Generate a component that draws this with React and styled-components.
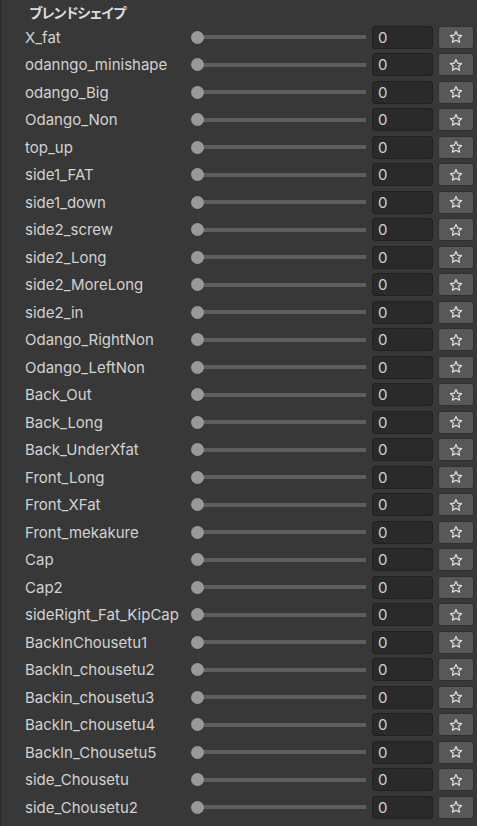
import React from 'react';
import styled, { createGlobalStyle } from 'styled-components';

const GlobalStyle = createGlobalStyle`
  html, body {
    margin: 0;
    padding: 0;
    background: #383838;
  }
  body {
    font-family: Inter, "Noto Sans", "Noto Sans CJK JP", sans-serif;
  }
`;

const Panel = styled.div`
  width: 477px;
  height: 826px;
  box-sizing: border-box;
  background: #383838;
  border-left: 2px solid #2e2e2e;
  overflow: hidden;
  display: flex;
  flex-direction: column;
`;

const Header = styled.div`
  height: 23.5px;
  display: flex;
  align-items: center;
  padding-left: 27px;
  font-family: "Noto Sans CJK JP", sans-serif;
  font-weight: 700;
  font-size: 14px;
  letter-spacing: -2px;
  color: #dcdcdc;
`;

const Row = styled.div`
  height: 27.5px;
  flex-shrink: 0;
  display: flex;
  align-items: center;
  padding-left: 23px;
  padding-right: 3px;
`;

const Label = styled.div`
  width: 166px;
  flex-shrink: 0;
  font-size: 15px;
  color: #d2d2d2;
  white-space: nowrap;
  overflow: hidden;
`;

const Slider = styled.div`
  position: relative;
  width: 175px;
  height: 14px;
  flex-shrink: 0;
  display: flex;
  align-items: center;
`;

const Track = styled.div`
  margin-left: 6px;
  flex: 1;
  height: 4px;
  background: #5e5e5e;
`;

const Knob = styled.div`
  position: absolute;
  left: 0;
  top: 0.5px;
  width: 13px;
  height: 13px;
  border-radius: 50%;
  background: #999999;
`;

const NumberField = styled.div`
  margin-left: 6px;
  width: 61px;
  height: 23px;
  box-sizing: border-box;
  border: 1px solid #212121;
  border-radius: 3px;
  background: #2a2a2a;
  color: #d2d2d2;
  font-size: 15px;
  display: flex;
  align-items: center;
  padding-left: 5px;
`;

const StarButton = styled.div`
  margin-left: 5px;
  width: 36px;
  height: 23px;
  box-sizing: border-box;
  border-radius: 3px;
  background: #585858;
  border: 1px solid #303030;
  display: flex;
  align-items: center;
  justify-content: center;
`;

const StarIcon = () => (
  <svg width="14" height="14" viewBox="0 0 24 24" fill="none" stroke="#e4e4e4" strokeWidth="2" strokeLinejoin="round">
    <path d="M12 2.5l2.9 6.3 6.8.7-5.1 4.6 1.5 6.8L12 17.4l-6.1 3.5 1.5-6.8-5.1-4.6 6.8-.7z" />
  </svg>
);

const shapes = [
  'X_fat', 'odanngo_minishape', 'odango_Big', 'Odango_Non', 'top_up',
  'side1_FAT', 'side1_down', 'side2_screw', 'side2_Long', 'side2_MoreLong',
  'side2_in', 'Odango_RightNon', 'Odango_LeftNon', 'Back_Out', 'Back_Long',
  'Back_UnderXfat', 'Front_Long', 'Front_XFat', 'Front_mekakure', 'Cap',
  'Cap2', 'sideRight_Fat_KipCap', 'BackInChousetu1', 'BackIn_chousetu2',
  'Backin_chousetu3', 'BackIn_chousetu4', 'BackIn_Chousetu5', 'side_Chousetu',
  'side_Chousetu2',
];

export default function App() {
  return (
    <>
      <GlobalStyle />
      <Panel>
        <Header>ブレンドシェイプ</Header>
        {shapes.map((name) => (
          <Row key={name}>
            <Label>{name}</Label>
            <Slider>
              <Track />
              <Knob />
            </Slider>
            <NumberField>0</NumberField>
            <StarButton>
              <StarIcon />
            </StarButton>
          </Row>
        ))}
      </Panel>
    </>
  );
}
